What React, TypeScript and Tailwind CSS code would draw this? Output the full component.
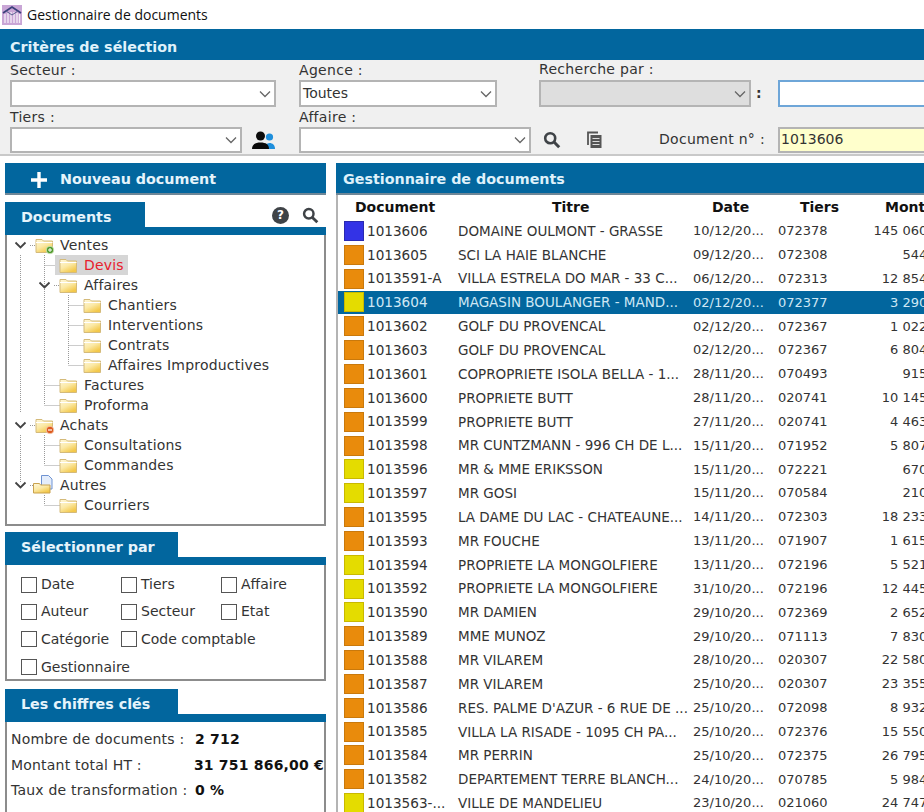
import React from 'react';

const verdana = { fontFamily: '"DejaVu Sans", Verdana, sans-serif' };

type Row = { num: string; title: string; date: string; tiers: string; amount: string; color: 'blue' | 'orange' | 'yellow'; active?: boolean };

const rows: Row[] = [
  { num: '1013606', title: 'DOMAINE OULMONT - GRASSE', date: '10/12/20...', tiers: '072378', amount: '145 060,00', color: 'blue' },
  { num: '1013605', title: 'SCI LA HAIE BLANCHE', date: '09/12/20...', tiers: '072308', amount: '544,00', color: 'orange' },
  { num: '1013591-A', title: 'VILLA ESTRELA DO MAR - 33 C...', date: '06/12/20...', tiers: '072313', amount: '12 854,00', color: 'orange' },
  { num: '1013604', title: 'MAGASIN BOULANGER - MAND...', date: '02/12/20...', tiers: '072377', amount: '3 290,00', color: 'yellow', active: true },
  { num: '1013602', title: 'GOLF DU PROVENCAL', date: '02/12/20...', tiers: '072367', amount: '1 022,00', color: 'orange' },
  { num: '1013603', title: 'GOLF DU PROVENCAL', date: '02/12/20...', tiers: '072367', amount: '6 804,00', color: 'orange' },
  { num: '1013601', title: 'COPROPRIETE ISOLA BELLA - 1...', date: '28/11/20...', tiers: '070493', amount: '915,00', color: 'orange' },
  { num: '1013600', title: 'PROPRIETE BUTT', date: '28/11/20...', tiers: '020741', amount: '10 145,00', color: 'orange' },
  { num: '1013599', title: 'PROPRIETE BUTT', date: '27/11/20...', tiers: '020741', amount: '4 463,00', color: 'orange' },
  { num: '1013598', title: 'MR CUNTZMANN - 996 CH DE L...', date: '15/11/20...', tiers: '071952', amount: '5 807,00', color: 'orange' },
  { num: '1013596', title: 'MR & MME ERIKSSON', date: '15/11/20...', tiers: '072221', amount: '670,00', color: 'yellow' },
  { num: '1013597', title: 'MR GOSI', date: '15/11/20...', tiers: '070584', amount: '210,00', color: 'yellow' },
  { num: '1013595', title: 'LA DAME DU LAC - CHATEAUNE...', date: '14/11/20...', tiers: '072303', amount: '18 233,00', color: 'orange' },
  { num: '1013593', title: 'MR FOUCHE', date: '13/11/20...', tiers: '071907', amount: '1 615,00', color: 'orange' },
  { num: '1013594', title: 'PROPRIETE LA MONGOLFIERE', date: '13/11/20...', tiers: '072196', amount: '5 521,00', color: 'yellow' },
  { num: '1013592', title: 'PROPRIETE LA MONGOLFIERE', date: '31/10/20...', tiers: '072196', amount: '12 445,00', color: 'yellow' },
  { num: '1013590', title: 'MR DAMIEN', date: '29/10/20...', tiers: '072369', amount: '2 652,00', color: 'yellow' },
  { num: '1013589', title: 'MME MUNOZ', date: '29/10/20...', tiers: '071113', amount: '7 830,00', color: 'orange' },
  { num: '1013588', title: 'MR VILAREM', date: '28/10/20...', tiers: '020307', amount: '22 580,00', color: 'orange' },
  { num: '1013587', title: 'MR VILAREM', date: '25/10/20...', tiers: '020307', amount: '23 355,00', color: 'orange' },
  { num: '1013586', title: "RES. PALME D'AZUR - 6 RUE DE ...", date: '25/10/20...', tiers: '072098', amount: '8 932,00', color: 'orange' },
  { num: '1013585', title: 'VILLA LA RISADE - 1095 CH PA...', date: '25/10/20...', tiers: '072376', amount: '15 550,00', color: 'orange' },
  { num: '1013584', title: 'MR PERRIN', date: '25/10/20...', tiers: '072375', amount: '26 795,00', color: 'orange' },
  { num: '1013582', title: 'DEPARTEMENT TERRE BLANCH...', date: '24/10/20...', tiers: '070785', amount: '5 984,00', color: 'orange' },
  { num: '1013563-...', title: 'VILLE DE MANDELIEU', date: '23/10/20...', tiers: '021060', amount: '24 747,00', color: 'yellow' },
];

const swatch = {
  blue: 'bg-[#3333e6] border-[#2a2ab0]',
  orange: 'bg-[#e98b0c] border-[#c9790c]',
  yellow: 'bg-[#e4dc00] border-[#c9b800]',
};

type TreeItem = { label: string; pad: string; badge?: 'plus' | 'minus' | 'doc'; selected?: boolean };

const tree: TreeItem[] = [
  { label: 'Ventes', pad: 'pl-[24px]', badge: 'plus' },
  { label: 'Devis', pad: 'pl-[48px]', selected: true },
  { label: 'Affaires', pad: 'pl-[48px]' },
  { label: 'Chantiers', pad: 'pl-[72px]' },
  { label: 'Interventions', pad: 'pl-[72px]' },
  { label: 'Contrats', pad: 'pl-[72px]' },
  { label: 'Affaires Improductives', pad: 'pl-[72px]' },
  { label: 'Factures', pad: 'pl-[48px]' },
  { label: 'Proforma', pad: 'pl-[48px]' },
  { label: 'Achats', pad: 'pl-[24px]', badge: 'minus' },
  { label: 'Consultations', pad: 'pl-[48px]' },
  { label: 'Commandes', pad: 'pl-[48px]' },
  { label: 'Autres', pad: 'pl-[24px]', badge: 'doc' },
  { label: 'Courriers', pad: 'pl-[48px]' },
];

const Chevron = () => (
  <svg width="14" height="8" viewBox="0 0 14 8" fill="none" stroke="#666" strokeWidth="1.3">
    <path d="M2 1.5 7 6.5 12 1.5" />
  </svg>
);

const Combo = ({ value, className = 'bg-white' }: { value?: string; className?: string }) => (
  <div className={`flex items-center justify-between border-2 border-[#b4b4b4] pl-[2px] pr-[2px] ${className}`}>
    <span className="text-[14px] text-[#333]">{value}</span>
    <Chevron />
  </div>
);

const Folder = ({ badge }: { badge?: TreeItem['badge'] }) => (
  <svg width="19" height="18" viewBox="0 0 19 18" className="shrink-0 overflow-visible">
    <defs>
      <linearGradient id="fold" x1="0" y1="0" x2="0.6" y2="1">
        <stop offset="0" stopColor="#fff8dc" />
        <stop offset="0.55" stopColor="#fbe9a6" />
        <stop offset="1" stopColor="#f3c84a" />
      </linearGradient>
    </defs>
    {badge === 'doc' ? (
      <g>
        <path d="M6.500-.500h7l3.500 3.500v10h-10.500z" fill="#e4edfb" stroke="#6f93d2" />
        <path d="M-1.500 7.500h6l1 1.500h9.500v8h-16.500z" fill="url(#fold)" stroke="#c9a24f" />
      </g>
    ) : (
      <g>
        <path d="M1 3.5h6l1.5 1.5H17.5v11.5H1z" fill="url(#fold)" stroke="#d4ba7a" />
        <path d="M1 6.5h16.5" stroke="#fff" strokeWidth="1" />
      </g>
    )}
    {badge === 'plus' && (
      <g>
        <circle cx="15" cy="14" r="3.8" fill="#4f9a2c" stroke="#dcecc8" strokeWidth="0.8" />
        <path d="M13 14h4M15 12v4" stroke="#fff" strokeWidth="1" />
      </g>
    )}
    {badge === 'minus' && (
      <g>
        <circle cx="15" cy="14" r="3.8" fill="#dd5a1e" stroke="#f7d6bf" strokeWidth="0.8" />
        <path d="M13 14h4" stroke="#fff" strokeWidth="1.2" />
      </g>
    )}
  </svg>
);

const SearchIcon = ({ size = 18 }: { size?: number }) => (
  <svg width={size} height={size} viewBox="0 0 18 18" fill="none" stroke="#3f4347">
    <circle cx="7.2" cy="7.2" r="5" strokeWidth="2.6" />
    <path d="M11 11l5.2 5.2" strokeWidth="3" />
  </svg>
);

const Panel = ({ title, tabWidth, right, children, className = '' }: { title: string; tabWidth: string; right?: React.ReactNode; children: React.ReactNode; className?: string }) => (
  <section>
    <div className="flex h-[25px] items-stretch justify-between">
      <div className={`flex items-center bg-[#02669e] pl-[16px] pt-[6px] text-[14.3px] font-bold text-[#e6f4fb] ${tabWidth}`}>{title}</div>
      {right}
    </div>
    <div className="h-[8px] bg-[#02669e]" />
    <div className={`border-x-2 border-b-2 border-[#8c8c8c] bg-white ${className}`}>{children}</div>
  </section>
);

const Check = ({ label, className }: { label: string; className: string }) => (
  <label className={`flex items-center gap-[4px] ${className}`}>
    <span className="h-[16px] w-[16px] shrink-0 border border-[#555] bg-white" />
    <span className="whitespace-nowrap">{label}</span>
  </label>
);

const FieldLabel = ({ children }: { children: React.ReactNode }) => (
  <div className="flex h-[20px] items-center whitespace-nowrap pt-[1px] tracking-[0.3px]">{children}</div>
);

export default function App() {
  return (
    <div className="h-[812px] w-[924px] overflow-hidden bg-white text-[#333]" style={verdana}>
      {/* Title bar */}
      <div className="flex h-[29px] items-center gap-[5px] pl-[2px]">
        <svg width="20" height="20" viewBox="0 0 20 20" className="shrink-0">
          <rect width="20" height="20" fill="#c9a6d6" />
          <path d="M1 8 10 2l9 6" fill="none" stroke="#3a3f7a" strokeWidth="1.6" />
          <path d="M3 9v9M6 8v10M9 7v11M12 7v11M15 8v10M17.5 9v9" stroke="#f4eef7" strokeWidth="1.3" />
          <path d="M4 6l6 4 6-4" fill="none" stroke="#57608f" strokeWidth="1" />
        </svg>
        <span className="text-[14px] text-[#111]" style={{ fontFamily: '"Open Sans", sans-serif' }}>Gestionnaire de documents</span>
      </div>

      {/* Critères */}
      <div className="flex h-[31px] items-center bg-[#02669e] pl-[10px] pt-[6px] text-[14.3px] font-bold text-[#dff1fa]">Critères de sélection</div>
      <div className="h-[96px] border-b-2 border-[#c9c9c9] bg-[#f0f0f0] text-[14px]">
        <div className="flex">
          <div className="ml-[10px] w-[266px] shrink-0">
            <FieldLabel>Secteur :</FieldLabel>
            <Combo className="h-[27px] bg-white" />
          </div>
          <div className="ml-[23px] w-[198px] shrink-0">
            <FieldLabel>Agence :</FieldLabel>
            <Combo value="Toutes" className="h-[27px] bg-white" />
          </div>
          <div className="ml-[42px] w-[212px] shrink-0">
            <div className="flex h-[19px] items-center whitespace-nowrap tracking-[0.3px]">Recherche par :</div>
            <Combo className="mt-px h-[27px] bg-[#dedede]" />
          </div>
          <span className="ml-[5px] mt-[23px] w-[7px] shrink-0 font-bold">:</span>
          <div className="ml-[15px] mt-[20px] h-[27px] w-[200px] shrink-0 border-2 border-[#6ea6d8] bg-white" />
        </div>
        <div className="flex">
          <div className="ml-[10px] w-[232px] shrink-0">
            <FieldLabel>Tiers :</FieldLabel>
            <Combo className="h-[26px] bg-white" />
          </div>
          <div className="ml-[10px] mt-[24px] flex w-[24px] shrink-0 items-start">
            <svg width="24" height="19" viewBox="0 0 24 19">
              <circle cx="17.5" cy="6" r="3.6" fill="#1f8fdc" />
              <path d="M13 18c0-4 1.500-6 4.500-6s5.500 2 5.500 6z" fill="#1f8fdc" />
              <circle cx="8.500" cy="5" r="4.500" fill="#0b0b0b" />
              <path d="M0 18c0-4.500 3-6.500 8.500-6.500S17 13.500 17 18z" fill="#0b0b0b" />
            </svg>
          </div>
          <div className="ml-[23px] w-[232px] shrink-0">
            <FieldLabel>Affaire :</FieldLabel>
            <Combo className="h-[26px] bg-white" />
          </div>
          <div className="ml-[12px] mt-[24px] shrink-0"><SearchIcon /></div>
          <div className="ml-[26px] mt-[24px] shrink-0">
            <svg width="16" height="18" viewBox="0 0 16 18" fill="none">
              <path d="M1 14V1.500h10" stroke="#555" strokeWidth="1.800" />
              <rect x="3.500" y="4" width="11" height="13" fill="#555" />
              <path d="M5.500 7.500h7M5.500 10.500h7M5.500 13.500h7" stroke="#ddd" strokeWidth="1" />
            </svg>
          </div>
          <div className="ml-[56px] mt-[20px] flex h-[26px] w-[104px] shrink-0 items-center whitespace-nowrap pb-[2px] tracking-[0.3px]">Document n° :</div>
          <div className="ml-[15px] mt-[20px] flex h-[26px] w-[200px] shrink-0 items-center border-2 border-[#b4b4b4] bg-[#ffffcc] pb-[2px] pl-[1px]">1013606</div>
        </div>
      </div>

      {/* Corps */}
      <div className="mt-[7px] flex text-[14px] tracking-[0.2px]">
        <aside className="ml-[5px] w-[321px] shrink-0">
          <button className="flex h-[32px] w-full items-center gap-[12px] border-b-2 border-[#6f8797] bg-[#02669e] pl-[25px] pt-[3px] text-[14.3px] font-bold tracking-normal text-[#e6f4fb]">
            <svg width="18" height="18" viewBox="0 0 18 18"><path d="M9 1v16M1 9h16" stroke="#fff" strokeWidth="3.400" /></svg>
            <span>Nouveau document</span>
          </button>

          <div className="mt-[7px]">
            <Panel
              title="Documents"
              tabWidth="w-[140px] tracking-normal"
              right={
                <div className="flex items-center gap-[13px] pr-[7px] pt-[1px]">
                  <span className="flex h-[17px] w-[17px] items-center justify-center rounded-full bg-[#3f4347] text-[12px] font-bold text-white">?</span>
                  <SearchIcon size={17} />
                </div>
              }
              className="h-[291px]"
            >
              <div className="relative">
                <svg width="319" height="290" className="absolute left-0 top-0" fill="none">
                  <g stroke="#999" strokeDasharray="1 1">
                    <path d="M13.500 20v158M37.500 20v150M61.500 60v70" />
                    <path d="M23 10.500h6M37.500 30.500h15M47 50.500h6M61.500 70.500h15M61.500 90.500h15M61.500 110.500h15M61.500 130.500h15M37.500 150.500h15M37.500 170.500h15M23 190.500h6" />
                    <path d="M37.500 200v30M37.500 210.500h15M37.500 230.500h15M13.500 200v48M23 250.500h6M37.500 260v10M37.500 270.500h15" />
                  </g>
                  <g stroke="#444" strokeWidth="1.800">
                    <path d="M8.500 7.500 13.500 12.500 18.500 7.500M32.500 47.500 37.500 52.500 42.500 47.500M8.500 187.500 13.500 192.500 18.500 187.500M8.500 247.500 13.500 252.500 18.500 247.500" />
                  </g>
                </svg>
                {tree.map((t) => (
                  <div key={t.label} className={`relative flex h-[20px] items-center ${t.pad}`}>
                    <span className={`flex h-[20px] items-center gap-[6px] px-[4px] ${t.selected ? 'bg-[#d6d6d6] text-[#e8202c]' : ''}`}>
                      <Folder badge={t.badge} />
                      {t.label}
                    </span>
                  </div>
                ))}
              </div>
            </Panel>
          </div>

          <div className="mt-[6px]">
            <Panel title="Sélectionner par" tabWidth="w-[173px] tracking-normal" className="h-[116px]">
              <div className="pl-[14px] pt-[6px] tracking-normal">
                <div className="flex h-[27px] items-center">
                  <Check label="Date" className="w-[100px]" />
                  <Check label="Tiers" className="w-[100px]" />
                  <Check label="Affaire" className="w-[80px]" />
                </div>
                <div className="flex h-[27px] items-center">
                  <Check label="Auteur" className="w-[100px]" />
                  <Check label="Secteur" className="w-[100px]" />
                  <Check label="Etat" className="w-[80px]" />
                </div>
                <div className="flex h-[28px] items-center">
                  <Check label="Catégorie" className="w-[100px]" />
                  <Check label="Code comptable" className="w-[180px]" />
                </div>
                <div className="flex h-[28px] items-center">
                  <Check label="Gestionnaire" className="w-[120px]" />
                </div>
              </div>
            </Panel>
          </div>

          <div className="mt-[8px]">
            <Panel title="Les chiffres clés" tabWidth="w-[173px] tracking-normal" className="h-[120px] overflow-hidden">
              <div className="whitespace-nowrap pl-[4px] pt-[4px]">
                <div className="flex h-[26px] items-center"><span className="w-[184px]">Nombre de documents :</span><b className="text-[#111]">2 712</b></div>
                <div className="flex h-[26px] items-center"><span className="w-[184px]">Montant total HT :</span><b className="text-[#111]">31 751 866,00 €</b></div>
                <div className="flex h-[25px] items-center"><span className="w-[184px]">Taux de transformation :</span><b className="text-[#111]">0 %</b></div>
              </div>
            </Panel>
          </div>
        </aside>

        {/* Liste */}
        <main className="ml-[10px] w-[640px] shrink-0 tracking-normal">
          <div className="flex h-[32px] items-center border-b-2 border-[#6f8797] bg-[#02669e] pl-[7px] pt-[3px] text-[14.3px] font-bold text-[#dff1fa]">Gestionnaire de documents</div>
          <div className="border-l-2 border-[#b4b4b4] pb-[4px]">
            <div className="flex h-[24px] items-center font-bold text-[#111]">
              <span className="ml-[17px] w-[104px]">Document</span>
              <span className="w-[235px] pl-[93px]">Titre</span>
              <span className="w-[85px] pl-[18px]">Date</span>
              <span className="w-[70px] pl-[21px]">Tiers</span>
              <span className="pl-[36px]">Montant</span>
            </div>
            {rows.map((r) => (
              <div key={r.num} className={`flex h-[23.85px] items-center whitespace-nowrap text-[13px] ${r.active ? 'bg-[#02669e] text-[#cfe8f5]' : ''}`}>
                <span className={`ml-[6px] h-[20px] w-[20px] shrink-0 border ${swatch[r.color]}`} />
                <span className="ml-[3px] w-[91px] text-[13.6px]">{r.num}</span>
                <span className="w-[235px] text-[13.5px]">{r.title}</span>
                <span className="w-[85px]">{r.date}</span>
                <span className="w-[70px]">{r.tiers}</span>
                <span className="w-[100px] text-right">{r.amount}</span>
              </div>
            ))}
          </div>
        </main>
      </div>
    </div>
  );
}
